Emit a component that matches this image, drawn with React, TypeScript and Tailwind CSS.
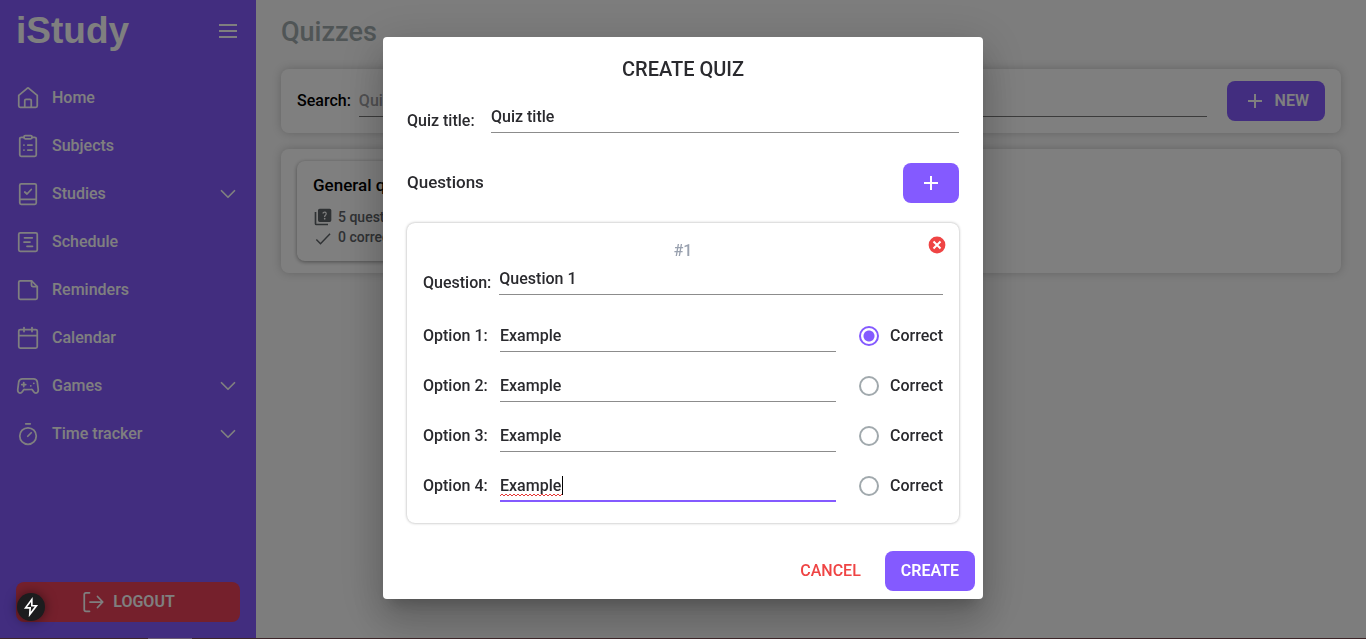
import React, { useState } from 'react';

type IconProps = { className?: string };

const Svg = ({ className = 'size-6', children }: React.PropsWithChildren<IconProps>) => (
  <svg
    viewBox="0 0 24 24"
    className={className}
    fill="none"
    stroke="currentColor"
    strokeWidth="1.75"
    strokeLinecap="round"
    strokeLinejoin="round"
    aria-hidden="true"
  >
    {children}
  </svg>
);

const icons = {
  home: (
    <Svg>
      <path d="M2.75 9.4 11.2 2.3a1.3 1.3 0 0 1 1.6 0l8.45 7.1v10.35a1.5 1.5 0 0 1-1.5 1.5H4.25a1.5 1.5 0 0 1-1.5-1.5Z" />
      <path d="M8.75 21v-6.5a1.25 1.25 0 0 1 1.25-1.25h4a1.25 1.25 0 0 1 1.25 1.25V21" />
    </Svg>
  ),
  clipboard: (
    <Svg>
      <path d="M8 3.25H5.25a1.5 1.5 0 0 0-1.5 1.5v16a1.5 1.5 0 0 0 1.5 1.5h13.5a1.5 1.5 0 0 0 1.5-1.5v-16a1.5 1.5 0 0 0-1.5-1.5H16" />
      <path d="M9.25 1.5h5.5A1.25 1.25 0 0 1 16 2.75v.75a1.25 1.25 0 0 1-1.25 1.25h-5.5A1.25 1.25 0 0 1 8 3.5v-.75A1.25 1.25 0 0 1 9.25 1.5Z" />
      <path d="M11.75 11H16M11.75 16H16M7.9 11h.1M7.9 16h.1" />
    </Svg>
  ),
  book: (
    <Svg>
      <path d="M5.25 1.75h13.5a1.5 1.5 0 0 1 1.5 1.5v17.5a1.5 1.5 0 0 1-1.5 1.5H5.25a1.5 1.5 0 0 1-1.5-1.5V3.25a1.5 1.5 0 0 1 1.5-1.5Z" />
      <path d="M4 17.25h16M8.75 10l2.25 2 4.25-4.5" />
    </Svg>
  ),
  schedule: (
    <Svg>
      <rect x="2.75" y="2.75" width="18.5" height="18.5" rx="1.5" />
      <path d="M8.5 7.75h7.75M8 12h6M11 16.25h5.5" />
    </Svg>
  ),
  note: (
    <Svg>
      <path d="M15.5 2.75H4.25a1.5 1.5 0 0 0-1.5 1.5v15.5a1.5 1.5 0 0 0 1.5 1.5h15.5a1.5 1.5 0 0 0 1.5-1.5V8.5Z" />
      <path d="M15.5 2.75v4.5a1.25 1.25 0 0 0 1.25 1.25h4.5" />
    </Svg>
  ),
  calendar: (
    <Svg>
      <rect x="2.75" y="3.5" width="18.5" height="18.5" rx="1.5" />
      <path d="M3 9.5h18M8 1.5v4M16 1.5v4" />
    </Svg>
  ),
  gamepad: (
    <Svg>
      <path d="M6.5 4.75h11c2 0 3.3 1 3.75 3l1 7.75c.2 2-.8 3.5-2.25 3.5-1.2 0-1.9-.7-2.5-1.6l-.8-1.2a1.7 1.7 0 0 0-1.4-.7H8.7a1.7 1.7 0 0 0-1.4.7l-.8 1.2c-.6.9-1.3 1.6-2.5 1.6-1.45 0-2.45-1.5-2.25-3.5l1-7.75c.45-2 1.75-3 3.75-3Z" />
      <path d="M7.75 8.5v4M5.75 10.5h4M14.75 11.75h.1M17.75 9.25h.1" />
    </Svg>
  ),
  timer: (
    <Svg>
      <circle cx="12" cy="14" r="8.25" />
      <path d="m11.75 14.25 3.5-3.5M9.75 1.75h4.5" />
    </Svg>
  ),
};

const ChevronDown = () => (
  <Svg className="size-6">
    <path d="m5.5 8.75 6.5 6.5 6.5-6.5" />
  </Svg>
);

const Plus = () => (
  <Svg className="size-6">
    <path d="M12 5v14M5 12h14" strokeWidth="2" strokeLinecap="butt" />
  </Svg>
);

const navItems: { label: string; icon: React.ReactNode; expandable?: boolean }[] = [
  { label: 'Home', icon: icons.home },
  { label: 'Subjects', icon: icons.clipboard },
  { label: 'Studies', icon: icons.book, expandable: true },
  { label: 'Schedule', icon: icons.schedule },
  { label: 'Reminders', icon: icons.note },
  { label: 'Calendar', icon: icons.calendar },
  { label: 'Games', icon: icons.gamepad, expandable: true },
  { label: 'Time tracker', icon: icons.timer, expandable: true },
];

function Sidebar() {
  return (
    <aside className="flex w-64 shrink-0 flex-col bg-[#845aff] text-white">
      <header className="flex h-[62px] items-center justify-between px-4">
        <span className="font-['Liberation_Sans',sans-serif] text-[37px] font-bold">iStudy</span>
        <button type="button" aria-label="Toggle menu">
          <Svg className="size-6">
            <path d="M3 6h18M3 12h18M3 18h18" strokeWidth="2" strokeLinecap="butt" />
          </Svg>
        </button>
      </header>
      <nav className="flex flex-col pt-3">
        {navItems.map((item) => (
          <a key={item.label} href="#" className="flex h-12 items-center gap-3 px-4">
            {item.icon}
            <span className="grow">{item.label}</span>
            {item.expandable && <ChevronDown />}
          </a>
        ))}
      </nav>
      <div className="mt-auto px-4 pb-[17px]">
        <button
          type="button"
          className="flex h-10 w-full items-center justify-center gap-2 rounded-lg bg-[#ea4058] font-semibold"
        >
          <Svg className="size-6">
            <path d="M8.5 2.75H5a1.75 1.75 0 0 0-1.75 1.75v15A1.75 1.75 0 0 0 5 21.25h3.5M9 12h12.25M16.5 6.5l5.25 5.5-5.25 5.5" />
          </Svg>
          LOGOUT
        </button>
      </div>
    </aside>
  );
}

const panel = 'rounded-lg bg-white shadow-[0_0_10px_rgba(0,0,0,0.2)]';

function QuizzesPage() {
  return (
    <main className="min-w-0 grow bg-[#fafafa] px-[25px] pt-3">
      <h1 className="text-[27px] leading-10 font-medium text-[#a0abad]">Quizzes</h1>
      <section className={`${panel} mt-[17px] flex h-16 items-center px-4`}>
        <label htmlFor="search" className="mr-2">
          Search:
        </label>
        <input
          id="search"
          placeholder="Quiz title"
          className="mr-5 h-8 min-w-0 grow border-b border-[#777] bg-transparent outline-none placeholder:text-[#a0a0a4]"
        />
        <button
          type="button"
          className="flex h-10 items-center gap-2 rounded-lg bg-[#845aff] px-4 font-semibold text-white"
        >
          <Plus />
          NEW
        </button>
      </section>
      <section className={`${panel} mt-4 h-[124px] px-4 py-3`}>
        <article className="h-[100px] w-72 rounded-lg bg-white px-4 py-3 shadow-[0_1px_4px_rgba(0,0,0,0.4)]">
          <h2 className="text-[17px] leading-6">General quiz</h2>
          <p className="mt-[10px] flex h-5 items-center gap-[5px] text-sm text-[#5f6468]">
            <svg viewBox="0 0 24 24" className="size-5" fill="currentColor" aria-hidden="true">
              <path d="M4 6H2v14a2 2 0 0 0 2 2h14v-2H4V6Zm16-4H8a2 2 0 0 0-2 2v12a2 2 0 0 0 2 2h12a2 2 0 0 0 2-2V4a2 2 0 0 0-2-2Zm-5.99 13a1 1 0 1 1 0-2 1 1 0 0 1 0 2Zm2.1-5.32c-.74 1.08-1.43 1.42-1.43 2.32h-1.5c0-1.6.8-2.1 1.63-3 .73-.78.35-2.07-.8-2.07-.9 0-1.3.65-1.46 1.15l-1.37-.58C11.6 6.3 12.7 5.4 14 5.4c2.4 0 3.1 2.4 2.11 4.28Z" />
            </svg>
            5 questions
          </p>
          <p className="flex h-5 items-center gap-[5px] text-sm text-[#5f6468]">
            <svg
              viewBox="0 0 24 24"
              className="size-5"
              fill="none"
              stroke="currentColor"
              strokeWidth="1.75"
              aria-hidden="true"
            >
              <path d="m4 15 5 5L20.5 8" />
            </svg>
            0 correct
          </p>
        </article>
      </section>
    </main>
  );
}

function CreateQuizDialog() {
  const [correct, setCorrect] = useState(1);
  const field = 'min-w-0 grow bg-transparent outline-none';

  return (
    <div
      role="dialog"
      aria-labelledby="dialog-title"
      className="flex w-[600px] flex-col rounded-sm bg-white text-[#2a2a2e] shadow-[0_11px_15px_-7px_rgba(0,0,0,0.2),0_24px_38px_3px_rgba(0,0,0,0.14),0_9px_46px_8px_rgba(0,0,0,0.12)]"
    >
      <h2 id="dialog-title" className="pt-4 text-center text-xl leading-8">
        CREATE QUIZ
      </h2>
      <div className="px-6 pt-4">
        <div className="flex h-8 items-start">
          <label htmlFor="title" className="w-[84px] pt-2 leading-6">
            Quiz title:
          </label>
          <input id="title" defaultValue="Quiz title" className={`${field} h-8 border-b border-[#8c8c8c]`} />
        </div>
        <div className="mt-[30px] flex h-10 items-center justify-between">
          <h3 className="text-[17px]">Questions</h3>
          <button
            type="button"
            aria-label="Add question"
            className="flex h-10 w-14 items-center justify-center rounded-lg bg-[#845aff] text-white"
          >
            <Plus />
          </button>
        </div>
        <section className="relative mt-5 h-[300px] rounded-lg px-4 pt-4 shadow-[0_0_3px_rgba(0,0,0,0.35)]">
          <button type="button" aria-label="Remove question" className="absolute top-3 right-3 size-5">
            <svg viewBox="0 0 20 20" className="size-5" aria-hidden="true">
              <circle cx="10" cy="10" r="8.4" fill="#ef4444" />
              <path d="m6.5 6.5 7 7m0-7-7 7" stroke="#fff" strokeWidth="2" />
            </svg>
          </button>
          <p className="text-center leading-6 text-gray-400">#1</p>
          <div className="flex h-8 items-start">
            <label htmlFor="question" className="mr-2 pt-2 leading-6">
              Question:
            </label>
            <input id="question" defaultValue="Question 1" className={`${field} h-8 border-b border-[#8c8c8c]`} />
          </div>
          <div className="flex flex-col pt-4">
            {[1, 2, 3, 4].map((n) => (
              <div key={n} className="flex h-[50px] items-center">
                <label htmlFor={`option-${n}`} className="w-[77px]">
                  Option {n}:
                </label>
                {n === 4 ? (
                  <span className="relative flex grow">
                    <input
                      id={`option-${n}`}
                      defaultValue="Example"
                      className={`${field} h-8 border-b-2 border-[#845aff]`}
                    />
                    <svg
                      aria-hidden="true"
                      className="pointer-events-none absolute top-[23px] left-0 h-1 w-[62px]"
                      fill="none"
                      stroke="#e53935"
                    >
                      <path d="M0 3l2-2 2 2 2-2 2 2 2-2 2 2 2-2 2 2 2-2 2 2 2-2 2 2 2-2 2 2 2-2 2 2 2-2 2 2 2-2 2 2 2-2 2 2 2-2 2 2 2-2 2 2 2-2 2 2 2-2 2 2 2-2" />
                    </svg>
                    <span
                      aria-hidden="true"
                      className="pointer-events-none absolute top-[6px] left-[62px] h-[19px] w-px bg-black"
                    />
                  </span>
                ) : (
                  <input
                    id={`option-${n}`}
                    defaultValue="Example"
                    className={`${field} h-8 border-b border-[#8c8c8c]`}
                  />
                )}
                <label className="ml-[23px] flex items-center gap-[11px]">
                  <input
                    type="radio"
                    name="correct"
                    checked={correct === n}
                    onChange={() => setCorrect(n)}
                    className="size-5 appearance-none rounded-full border-2 border-[#a1a9ad] checked:border-[#845aff] checked:bg-[radial-gradient(circle,#845aff_5px,transparent_6px)]"
                  />
                  Correct
                </label>
              </div>
            ))}
          </div>
        </section>
      </div>
      <footer className="mt-5 flex justify-end gap-2 p-2">
        <button type="button" className="h-10 px-4 text-[#ef4444]">
          CANCEL
        </button>
        <button type="button" className="h-10 rounded-lg bg-[#845aff] px-4 font-semibold text-white">
          CREATE
        </button>
      </footer>
    </div>
  );
}

export default function App() {
  return (
    <div className="relative flex min-h-screen font-['Roboto',sans-serif] text-base font-medium text-black">
      <Sidebar />
      <QuizzesPage />
      <div className="fixed inset-0 flex items-center justify-center bg-black/50 pb-[3px]">
        <CreateQuizDialog />
      </div>
      <div className="fixed inset-x-0 bottom-0 h-px bg-[#3d2528]">
        <div className="ml-[148px] h-px w-11 bg-[#6b5c70]" />
      </div>
      <button
        type="button"
        aria-label="Developer tools"
        className="fixed bottom-[18px] left-[17px] flex size-7 items-center justify-center rounded-full bg-[#1c1c1e] text-white shadow-[0_0_12px_rgba(0,0,0,0.5)]"
      >
        <Svg className="size-5">
          <path d="M13 3 5.5 13H11l-.5 8 8-10.5H13Z" strokeWidth="2" strokeLinejoin="miter" />
        </Svg>
      </button>
    </div>
  );
}
